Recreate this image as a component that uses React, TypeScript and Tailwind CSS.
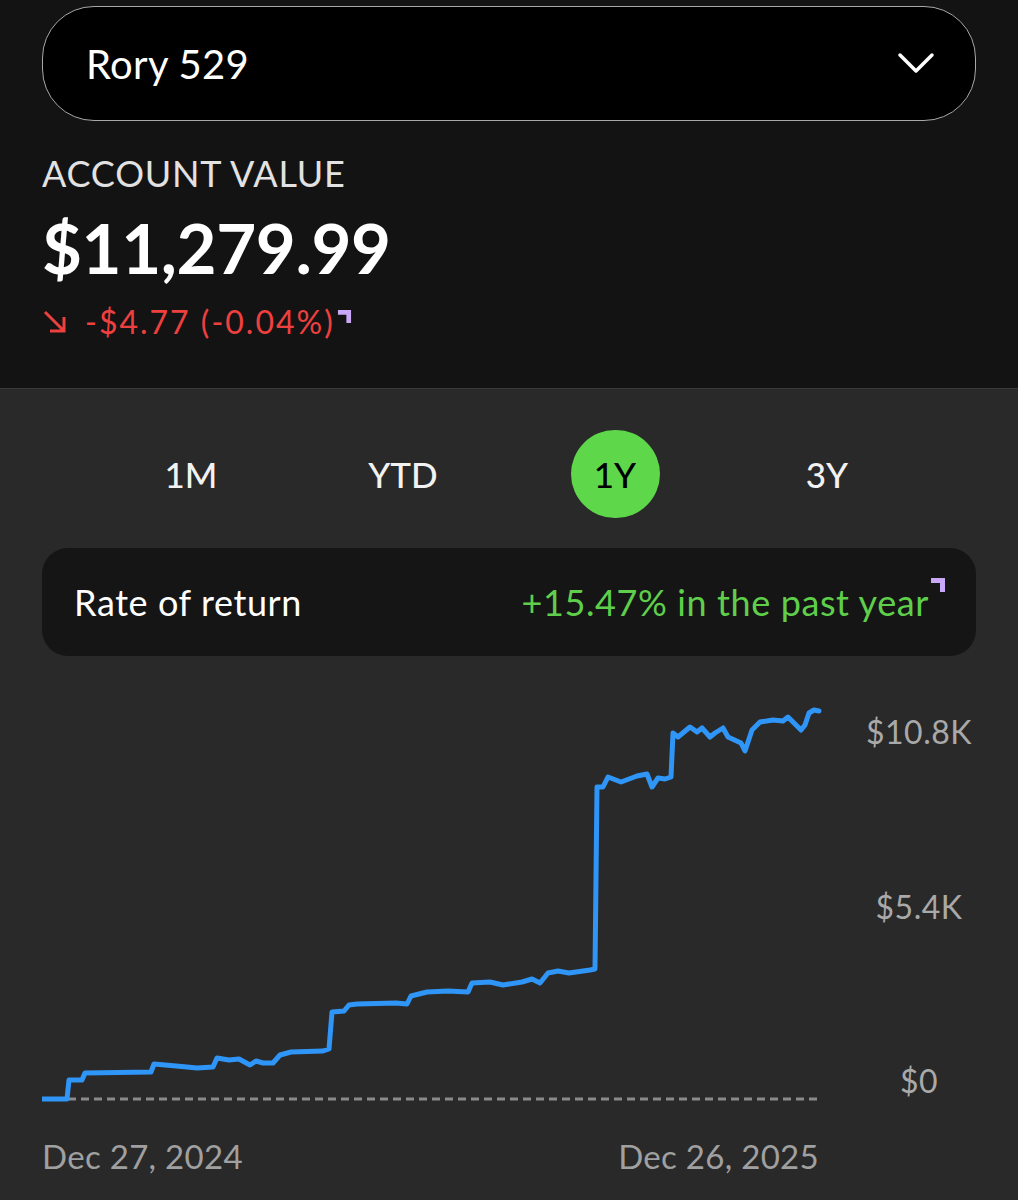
import React from "react";

const pts: [number, number][] = [
  [42, 1099], [67, 1099], [69, 1080], [82, 1080], [85, 1073], [151, 1072], [154, 1064], [187, 1067], [197, 1068], [213, 1067],
  [217, 1058], [229, 1060], [239, 1059], [250, 1065], [256, 1061], [263, 1063], [273, 1063], [280, 1055], [291, 1052], [323, 1051],
  [329, 1049], [332, 1012], [344, 1011], [349, 1005], [357, 1004], [396, 1003], [407, 1004], [411, 996], [427, 992], [448, 991],
  [468, 992], [472, 983], [490, 982], [503, 985], [522, 982], [532, 979], [540, 983], [548, 973], [558, 971], [569, 973],
  [590, 970], [595, 969], [597, 787], [603, 787], [608, 777], [621, 782], [637, 776], [647, 774], [652, 787], [658, 778],
  [665, 779], [671, 777], [673, 733], [678, 737], [690, 727], [697, 732], [702, 728], [710, 737], [715, 733], [723, 728],
  [728, 737], [741, 743], [745, 751], [752, 730], [760, 722], [773, 720], [783, 721], [788, 717], [794, 723], [801, 730],
  [805, 725], [809, 713], [814, 710], [819, 711],
];

function Corner({ className }: { className?: string }) {
  return (
    <svg className={className} viewBox="0 0 16 16" width="16" height="16">
      <path d="M1 1H15V15H10V6H1Z" fill="#c9a8f7" />
    </svg>
  );
}

export default function App() {
  const d = pts.map((p, i) => `${i === 0 ? "M" : "L"}${p[0]} ${p[1]}`).join(" ");
  return (
    <div className="w-[1018px] min-h-[1200px] bg-[#292929] flex flex-col" style={{ fontFamily: "Lato, 'Noto Sans', sans-serif" }}>
      <div className="bg-[#131313] h-[389px] border-b border-[#3a3a3a] px-[42px] pt-[6px] flex flex-col">
        <div className="h-[115px] rounded-[52px] border-[1.5px] border-[#a8a8a8] bg-black flex items-center justify-between pl-[43px] pr-[40px]">
          <span className="text-white text-[40px] leading-none tracking-[0.3px]">Rory 529</span>
          <svg width="38" height="24" viewBox="0 0 38 24" fill="none">
            <path d="M3 3L19 19L35 3" stroke="white" strokeWidth="3.5" strokeLinecap="round" strokeLinejoin="round" />
          </svg>
        </div>
        <div className="mt-[34px] text-[#e2e2e2] text-[36px] leading-none tracking-[0.8px]">ACCOUNT VALUE</div>
        <div className="mt-[22px] text-white text-[69px] font-bold leading-none tracking-[-0.4px]">$11,279.99</div>
        <div className="mt-[24px] flex items-center text-[#ef4040] text-[32px] leading-none">
          <svg width="26" height="26" viewBox="0 0 26 26" fill="none" className="mr-[17px]">
            <path d="M3 3L22 22M22 8V22H8" stroke="#ef4040" strokeWidth="3" />
          </svg>
          <span className="tracking-[2px]">-$4.77 (-0.04%)</span>
          <Corner className="w-[15px] h-[15px] self-start ml-[2px] mt-[3px]" />
        </div>
      </div>

      <div className="flex justify-center pt-[41px]">
        {["1M", "YTD", "1Y", "3Y"].map((t) => (
          <div key={t} className="w-[212px] flex justify-center">
            {t === "1Y" ? (
              <div className="w-[89px] h-[88px] rounded-full bg-[#5ed84a] flex items-center justify-center text-black text-[35px] font-medium">{t}</div>
            ) : (
              <div className="h-[88px] flex items-center text-[#f2f2f2] text-[35px] font-medium">{t}</div>
            )}
          </div>
        ))}
      </div>

      <div className="mx-[42px] mt-[30px] h-[108px] rounded-[26px] bg-[#151515] flex items-center justify-between pl-[32px] pr-[30px]">
        <span className="text-white text-[36px] tracking-[0.6px]">Rate of return</span>
        <div className="flex items-start">
          <span className="text-[#5fcf4b] text-[36px] tracking-[0.6px]">+15.47% in the past year</span>
          <Corner className="w-[16px] h-[16px] mt-[2px] ml-[1px]" />
        </div>
      </div>

      <div className="flex pl-[42px] mt-[34px] h-[420px]">
        <svg width="780" height="420" viewBox="42 690 780 420" className="shrink-0">
          <line x1="42" y1="1099" x2="820" y2="1099" stroke="#8a8a8a" strokeWidth="3" strokeDasharray="8 5" />
          <path d={d} fill="none" stroke="#2f95f7" strokeWidth="5" strokeLinejoin="round" strokeLinecap="round" />
        </svg>
        <div className="flex-1 flex flex-col justify-between items-center pt-[26px] pb-[13px] text-[#a9a9a9] text-[32px] leading-none pr-[2px] tracking-[0.5px]">
          <span>$10.8K</span>
          <span>$5.4K</span>
          <span>$0</span>
        </div>
      </div>

      <div className="flex pl-[42px] mt-[30px] w-[819px] justify-between text-[#a0a0a0] text-[33px] leading-none tracking-[0.3px]">
        <span>Dec 27, 2024</span>
        <span>Dec 26, 2025</span>
      </div>
    </div>
  );
}
